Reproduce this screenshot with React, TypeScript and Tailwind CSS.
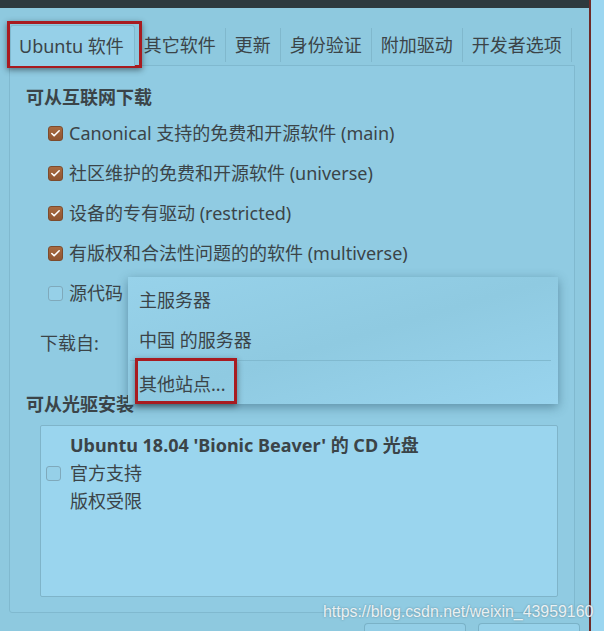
import { Check } from "lucide-react";

const font = { fontFamily: '"Noto Sans", "Noto Sans CJK SC", sans-serif' };

const tabs = ["其它软件", "更新", "身份验证", "附加驱动", "开发者选项"];

const sources = [
    { label: "Canonical 支持的免费和开源软件 (main)", on: true },
    { label: "社区维护的免费和开源软件 (universe)", on: true },
    { label: "设备的专有驱动 (restricted)", on: true },
    { label: "有版权和合法性问题的的软件 (multiverse)", on: true },
    { label: "源代码", on: false },
];

function Box({ on }: { on: boolean }) {
    if (on) {
        return (
            <span className="flex h-[15px] w-[15px] shrink-0 items-center justify-center rounded-[3px] border border-[#7d4b2c] bg-gradient-to-b from-[#a86a40] to-[#8f5532]">
                <Check size={11} strokeWidth={3.5} className="text-white" />
            </span>
        );
    }
    return <span className="h-[15px] w-[15px] shrink-0 rounded-[3px] border border-[#7fa9bb] bg-[#96d0e8]" />;
}

export default function App() {
    return (
        <div
            className="relative flex h-[631px] w-[604px] overflow-hidden bg-[#8ec9df] text-[18px] text-[#3b4448]"
            style={font}
        >
            {/* main window */}
            <div className="flex w-[589px] shrink-0 flex-col">
                <div className="h-[8px] shrink-0 bg-[#2e3a3f]" />

                {/* tab strip */}
                <div className="flex h-[57px] shrink-0 items-end pl-[10px]">
                    <div className="relative z-10 -mb-px flex h-[41px] items-center rounded-t-[3px] border border-b-0 border-[#80b9cf] bg-[#96d0e8] pr-[10px] pl-[8px]">
                        Ubuntu 软件
                    </div>
                    {tabs.map((t) => (
                        <div key={t} className="flex h-[40px] items-center">
                            <div className="px-[9px]">{t}</div>
                            <div className="h-[34px] w-px bg-[#80b8cd]" />
                        </div>
                    ))}
                </div>

                {/* notebook page */}
                <div className="ml-[9px] flex h-[548px] w-[566px] shrink-0 flex-col rounded-b-[3px] border border-[#80b9cf] bg-[#90cbe2]">
                    <div className="mt-[19px] shrink-0 pl-[16px] leading-[24px] font-bold">可从互联网下载</div>
                    <div className="mt-[4px] flex shrink-0 flex-col">
                        {sources.map((s) => (
                            <div key={s.label} className="flex h-[40px] shrink-0 items-center gap-[6px] pl-[38px]">
                                <Box on={s.on} />
                                <span>{s.label}</span>
                            </div>
                        ))}
                    </div>
                    <div className="mt-[10px] flex h-[40px] shrink-0 items-center pl-[30px]">下载自:</div>

                    <div className="mt-[29px] shrink-0 pl-[16px] leading-[24px] font-bold">可从光驱安装</div>
                    <div className="mt-[9px] ml-[30px] h-[172px] w-[518px] shrink-0 rounded-[2px] border border-[#7fb4c9] bg-[#9ad5ee] pt-[5px] pl-[5px]">
                        <div className="grid grid-cols-[15px_1fr] gap-x-[9px] leading-[28px]">
                            <span />
                            <span className="font-bold">Ubuntu 18.04 'Bionic Beaver' 的 CD 光盘</span>
                            <span className="flex items-center">
                                <Box on={false} />
                            </span>
                            <span>官方支持</span>
                            <span />
                            <span>版权受限</span>
                        </div>
                    </div>
                </div>

                {/* dialog buttons */}
                <div className="mt-[10px] flex shrink-0 gap-[12px] pl-[364px]">
                    <div className="h-[20px] w-[102px] rounded-t-[4px] border border-b-0 border-[#7ab2c7] bg-[#93cee6]" />
                    <div className="h-[20px] w-[102px] rounded-t-[4px] border border-b-0 border-[#7ab2c7] bg-[#97d2ea]" />
                </div>
            </div>

            <div className="w-[2px] shrink-0 bg-[#6e2a28]" />
            <div className="flex-1 bg-[#9bd6f0]" />

            {/* dropdown menu */}
            <div className="absolute top-[277px] left-[128px] flex h-[127px] w-[430px] flex-col bg-gradient-to-br from-[#97d2ea] via-[#8fcae1] to-[#99d4ee] pt-[3px] shadow-[0_3px_10px_rgba(30,70,90,0.45)]">
                <div className="flex h-[40px] items-center pl-[11px]">主服务器</div>
                <div className="flex h-[40px] items-center pl-[11px]">中国 的服务器</div>
                <div className="mr-[7px] ml-[2px] h-px bg-[#80b9cf]" />
                <div className="flex flex-1 items-center pt-[4px] pl-[11px]">其他站点...</div>
            </div>

            {/* annotation boxes */}
            <div className="absolute top-[21px] left-[7px] h-[47px] w-[135px] border-[3px] border-[#a81b20] shadow-[0_2px_6px_rgba(0,0,0,0.45)]" />
            <div className="absolute top-[358px] left-[135px] h-[46px] w-[102px] border-[3px] border-[#a81b20] shadow-[0_2px_6px_rgba(0,0,0,0.45)]" />

            {/* watermark */}
            <div
                className="absolute top-[602px] left-[323px] text-[15.9px] leading-[20px] whitespace-nowrap text-white/85 [text-shadow:0_0_2px_rgba(60,90,100,0.6)]"
                style={{ fontFamily: '"Liberation Sans", Arial, sans-serif' }}
            >
                https://blog.csdn.net/weixin_43959160
            </div>
        </div>
    );
}
